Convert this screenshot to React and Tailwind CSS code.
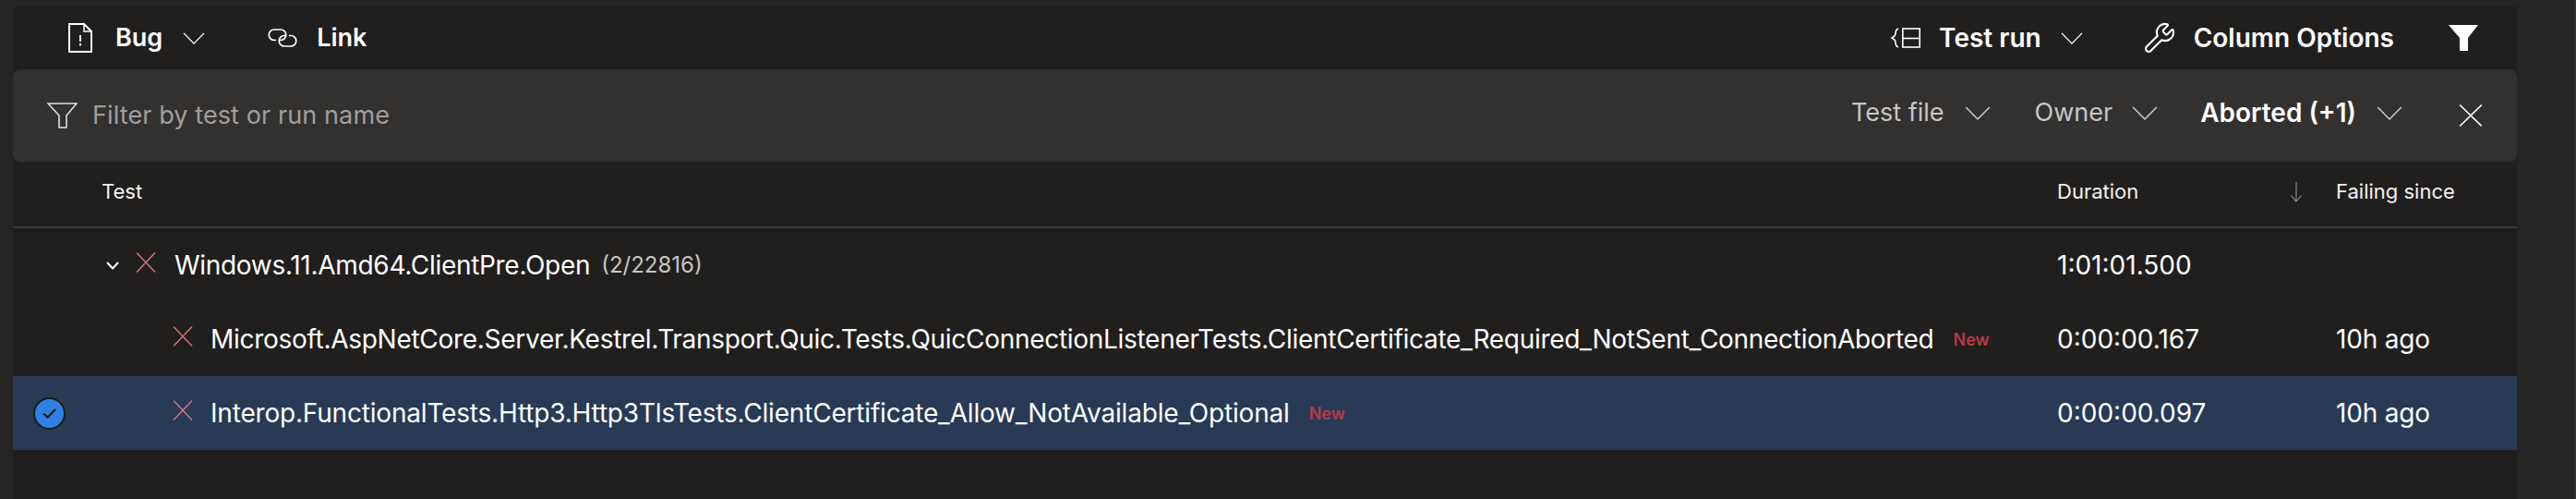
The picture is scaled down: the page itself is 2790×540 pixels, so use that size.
import { Wrench } from "lucide-react";

function Chevron({ className = "w-[24px] h-[13px]" }) {
  return (
    <svg viewBox="0 0 24 14" preserveAspectRatio="none" className={className} fill="none" stroke="currentColor" strokeWidth="1.4">
      <path d="M1 1 L12 13 L23 1" />
    </svg>
  );
}

function Cross({ className = "" }) {
  return (
    <svg viewBox="0 0 22 22" preserveAspectRatio="none" className={`shrink-0 ${className}`} fill="none" stroke="currentColor" strokeWidth="1.4">
      <path d="M1 0.5 L21 21.5 M21 0.5 L1 21.5" />
    </svg>
  );
}

function BugIcon() {
  return (
    <svg viewBox="0 0 26 32" className="w-[26px] h-[32px]" fill="none" stroke="white" strokeWidth="2">
      <path d="M1 1 H17 L25 9 V31 H1 Z" />
      <path d="M17 1 V9 H25" strokeWidth="1.5" />
      <path d="M13 13 V20 M13 22 V24.5" />
    </svg>
  );
}

function LinkIcon() {
  return (
    <svg viewBox="0 0 32 20" className="w-[32px] h-[20px]" fill="none" stroke="white" strokeWidth="1.7">
      <path d="M9 12.5 H7 A5.75 5.75 0 0 1 7 1 H14 A5.75 5.75 0 0 1 14 12.5 H12" />
      <path d="M23 7.5 H25 A5.75 5.75 0 0 1 25 19 H18 A5.75 5.75 0 0 1 18 7.5 H20" />
    </svg>
  );
}

function GroupIcon() {
  return (
    <svg viewBox="0 0 32 22" className="w-[32px] h-[22px]" fill="none" stroke="white" strokeWidth="1.6">
      <rect x="12.8" y="1" width="18.4" height="20" />
      <path d="M12.8 11.5 H31.2" />
      <path d="M8 1 C5 2 5 4 5 6 C5 8 3 10 1 11 C3 12 5 14 5 16 C5 18 5 20 8 21" />
    </svg>
  );
}

function FilterOutline() {
  return (
    <svg viewBox="0 0 33 28" className="w-[33px] h-[28px] shrink-0" fill="none" stroke="#e1dfdd" strokeWidth="1.6">
      <path d="M1 1 H32 L21 14 V27 H13 V14 Z" />
    </svg>
  );
}

function FilterSolid() {
  return (
    <svg viewBox="0 0 32 28" className="w-[32px] h-[28px]" fill="white">
      <path d="M0 0 H32 L21 14 V28 H12 V14 Z" />
    </svg>
  );
}

function CheckCircle() {
  return (
    <div className="w-[35px] h-[35px] rounded-full bg-[#2f80e2] border-2 border-[#1b1a19] flex items-center justify-center">
      <svg viewBox="0 0 16 12" className="w-[15px] h-[11px]" fill="none" stroke="#1b1a19" strokeWidth="2.4">
        <path d="M1 6 L6 10.5 L15 1" />
      </svg>
    </div>
  );
}

function NewTag() {
  return <span className="text-[18px] font-semibold text-[#b83a45] ml-[21px]">New</span>;
}

function TestRow({ name, nameClass, duration, since, selected }) {
  return (
    <div className={`h-[80px] flex items-center ${selected ? "bg-[#283a56]" : ""}`}>
      <div className="w-[173px] shrink-0 pl-[22px]">{selected && <CheckCircle />}</div>
      <Cross className="w-[22px] h-[22px] text-[#d9757c] -translate-y-[3px]" />
      <span className={`ml-[19px] text-[28px] text-white whitespace-nowrap ${nameClass}`}>{name}</span>
      <NewTag />
      <span className="ml-auto w-[302px] text-[28px] text-white">{duration}</span>
      <span className="w-[196px] text-[28px] tracking-[-0.2px] text-white">{since}</span>
    </div>
  );
}

export default function App() {
  return (
    <div className="w-[2790px] h-[540px] bg-[#262524] pt-[7px] pl-[14px] pr-[62px] border-r-2 border-[#323232] overflow-hidden [font-family:Inter,sans-serif]">
      <div className="h-[533px] bg-[#201f1e] flex flex-col">
        {/* toolbar */}
        <div className="h-[68px] flex items-center text-[28px] font-semibold text-white">
          <div className="ml-[60px] flex items-center">
            <BugIcon />
            <span className="ml-[25px] text-[27px]">Bug</span>
            <Chevron className="ml-[22px] w-[24px] h-[13px]" />
          </div>
          <div className="ml-[68px] flex items-center">
            <LinkIcon />
            <span className="ml-[21px] text-[27px]">Link</span>
          </div>
          <div className="ml-auto flex items-center">
            <GroupIcon />
            <span className="ml-[20px]">Test run</span>
            <Chevron className="ml-[21px] w-[24px] h-[13px]" />
          </div>
          <div className="ml-[65px] flex items-center">
            <Wrench size={36} strokeWidth={1.4} color="white" />
            <span className="ml-[19px]">Column Options</span>
          </div>
          <div className="ml-[59px] mr-[42px]">
            <FilterSolid />
          </div>
        </div>

        {/* filter bar */}
        <div className="h-[100px] rounded-lg bg-[#323130] flex items-center pl-[37px] text-[27px]">
          <FilterOutline />
          <span className="ml-[16px] tracking-[0.1px] text-[#a19f9d]">Filter by test or run name</span>
          <div className="ml-auto pb-[6px] flex items-center text-[#c8c6c4]">
            <span>Test file</span>
            <Chevron className="ml-[22px] w-[28px] h-[15px]" />
          </div>
          <div className="ml-[48px] pb-[6px] flex items-center text-[#c8c6c4]">
            <span>Owner</span>
            <Chevron className="ml-[21px] w-[28px] h-[15px]" />
          </div>
          <div className="ml-[46px] pb-[6px] flex items-center text-white">
            <span className="text-[28px] font-semibold">Aborted (+1)</span>
            <Chevron className="ml-[22px] w-[28px] h-[15px] text-[#c8c6c4]" />
          </div>
          <Cross className="ml-[61px] mr-[37px] w-[26px] h-[24px] text-white" />
        </div>

        {/* table head */}
        <div className="h-[72px] shrink-0 flex items-center pb-[5px] border-b-2 border-[#3b3a39] text-[22px] text-[#f3f2f1]">
          <span className="ml-[96px]">Test</span>
          <div className="ml-auto w-[302px] flex items-center">
            <span>Duration</span>
            <svg viewBox="0 0 14 24" className="w-[14px] h-[22px] ml-[164px]" fill="none" stroke="#8a8886" strokeWidth="1.3">
              <path d="M7 0 V23 M1 16 L7 23 L13 16" />
            </svg>
          </div>
          <span className="w-[196px]">Failing since</span>
        </div>

        {/* group row */}
        <div className="h-[80px] flex items-center">
          <svg viewBox="0 0 14 9" className="w-[14px] h-[9px] ml-[101px] text-white" fill="none" stroke="currentColor" strokeWidth="2">
            <path d="M1 1 L7 7.5 L13 1" />
          </svg>
          <Cross className="ml-[18px] w-[22px] h-[22px] text-[#d9757c] -translate-y-[3px]" />
          <span className="ml-[20px] text-[28px] tracking-[-0.3px] text-white">Windows.11.Amd64.ClientPre.Open</span>
          <span className="ml-[12px] text-[24px] text-[#c8c6c4]">(2/22816)</span>
          <span className="ml-auto w-[498px] text-[28px] text-white">1:01:01.500</span>
        </div>

        <TestRow
          name="Microsoft.AspNetCore.Server.Kestrel.Transport.Quic.Tests.QuicConnectionListenerTests.ClientCertificate_Required_NotSent_ConnectionAborted"
          nameClass="tracking-[-0.29px]"
          duration="0:00:00.167"
          since="10h ago"
        />
        <TestRow
          name="Interop.FunctionalTests.Http3.Http3TlsTests.ClientCertificate_Allow_NotAvailable_Optional"
          nameClass="tracking-[-0.19px]"
          duration="0:00:00.097"
          since="10h ago"
          selected
        />
      </div>
    </div>
  );
}
